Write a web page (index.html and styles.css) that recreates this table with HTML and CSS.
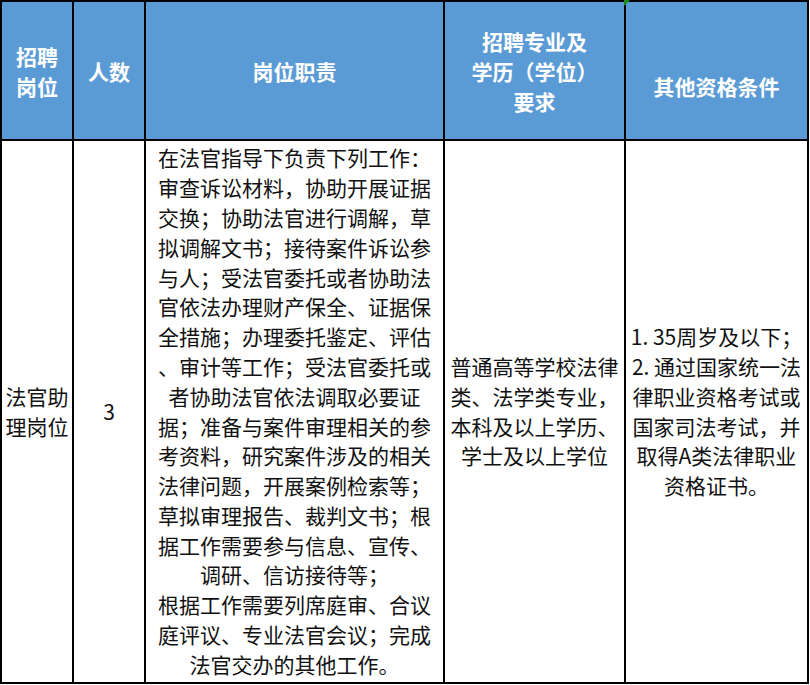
FILE: index.html
```html
<!DOCTYPE html>
<html lang="zh-CN">
<head>
<meta charset="utf-8">
<title>招聘岗位</title>
<link rel="stylesheet" href="styles.css">
</head>
<body>
<div class="sheet">
  <div class="cell head">招聘<br>岗位</div>
  <div class="cell head">人数</div>
  <div class="cell head">岗位职责</div>
  <div class="cell head">招聘专业及<br>学历（学位）<br>要求</div>
  <div class="cell head head-low"><span class="flag"></span>其他资格条件</div>

  <div class="cell body">法官助<br>理岗位</div>
  <div class="cell body">3</div>
  <div class="cell body">在法官指导下负责下列工作：<br>审查诉讼材料，协助开展证据<br>交换；协助法官进行调解，草<br>拟调解文书；接待案件诉讼参<br>与人；受法官委托或者协助法<br>官依法办理财产保全、证据保<br>全措施；办理委托鉴定、评估<br>、审计等工作；受法官委托或<br>者协助法官依法调取必要证<br>据；准备与案件审理相关的参<br>考资料，研究案件涉及的相关<br>法律问题，开展案例检索等；<br>草拟审理报告、裁判文书；根<br>据工作需要参与信息、宣传、<br>调研、信访接待等；<br>根据工作需要列席庭审、合议<br>庭评议、专业法官会议；完成<br>法官交办的其他工作。</div>
  <div class="cell body">普通高等学校法律<br>类、法学类专业，<br>本科及以上学历、<br>学士及以上学位</div>
  <div class="cell body">1. 35周岁及以下；<br>2. 通过国家统一法<br>律职业资格考试或<br>国家司法考试，并<br>取得A类法律职业<br>资格证书。</div>
</div>
</body>
</html>
```

FILE: styles.css
```css
html, body {
  margin: 0;
  padding: 0;
  background: #ffffff;
}

.sheet {
  display: grid;
  grid-template-columns: 70px 70px 297px 179px 181px;
  grid-template-rows: 137px 541px;
  gap: 2px;
  padding: 2px;
  background: #000000;
  width: max-content;
  font-family: "Noto Sans CJK SC", "Noto Sans", sans-serif;
  font-size: 21px;
}

.cell {
  display: flex;
  align-items: center;
  justify-content: center;
  text-align: center;
  white-space: nowrap;
  position: relative;
}

.head {
  background: #5b9bd5;
  color: #ffffff;
  font-weight: 700;
  line-height: 30px;
}

.head-low {
  padding-top: 30px;
  box-sizing: border-box;
}

.body {
  background: #ffffff;
  color: #111111;
  line-height: 29.8px;
}

.flag {
  position: absolute;
  left: -2px;
  top: -2px;
  width: 0;
  height: 0;
  border-top: 6px solid #1e8a1e;
  border-right: 6px solid transparent;
}
```
